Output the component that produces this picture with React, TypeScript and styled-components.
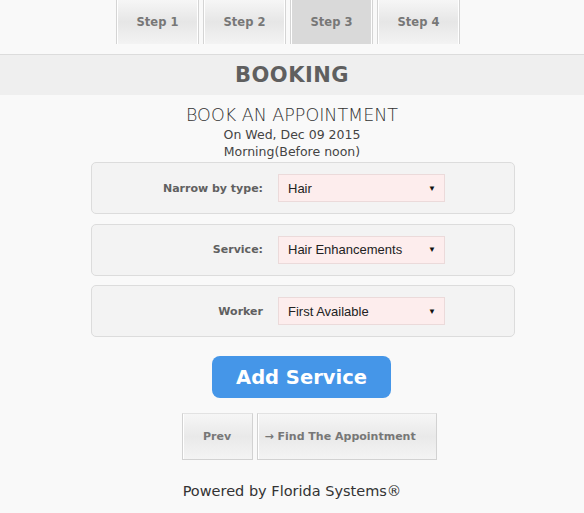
import React, { useState } from 'react';
import styled, { createGlobalStyle } from 'styled-components';

const GlobalStyle = createGlobalStyle`
    html, body {
        margin: 0;
        padding: 0;
        background: #f9f9f9;
        font-family: "DejaVu Sans", "Liberation Sans", sans-serif;
        color: #555;
    }
`;

const Page = styled.div`
    width: 584px;
    height: 513px;
    overflow: hidden;
    display: flex;
    flex-direction: column;
    align-items: center;
`;

const Tabs = styled.nav`
    display: flex;
    gap: 4px;
    height: 44px;
    align-self: stretch;
    justify-content: center;
    padding-right: 8px;
    margin-bottom: 10px;
`;

const Tab = styled.button<{ $active: boolean }>`
    width: 83px;
    height: 44px;
    border: none;
    border-left: 1px solid #d4d4d4;
    border-right: 1px solid #d4d4d4;
    box-shadow: inset 1px 0 0 #fff, inset -1px 0 0 #fff;
    background: ${p => p.$active
        ? '#d9d9d9'
        : 'linear-gradient(#f6f6f6 0%, #e6e6e6 50%, #f3f3f3 100%)'};
    font-family: "DejaVu Sans", sans-serif;
    font-weight: bold;
    font-size: 11.5px;
    color: #777;
    padding: 0;
    cursor: pointer;
`;

const TitleBar = styled.h1`
    align-self: stretch;
    margin: 0;
    height: 40px;
    line-height: 41px;
    border-top: 1px solid #dcdcdc;
    background: #efefef;
    text-align: center;
    font-size: 21px;
    font-weight: bold;
    color: #5f5f5f;
    letter-spacing: 0.5px;
`;

const Heading = styled.h2`
    margin: 10px 0 0;
    font-size: 17.5px;
    font-weight: 200;
    color: #333;
    line-height: 21px;
`;

const SubLine = styled.div`
    font-size: 12.5px;
    line-height: 17px;
    color: #444;
`;

const Panels = styled.div`
    display: flex;
    flex-direction: column;
    gap: 9.5px;
    margin-top: 2px;
    margin-left: 22px;
`;

const Panel = styled.div`
    width: 424px;
    height: 52px;
    box-sizing: border-box;
    border: 1px solid #dcdcdc;
    border-radius: 5px;
    background: #f3f3f3;
    display: grid;
    grid-template-columns: 171px 167px;
    column-gap: 15px;
    align-items: center;
`;

const Label = styled.label`
    text-align: right;
    font-size: 11px;
    font-weight: bold;
    color: #606060;
`;

const Select = styled.div`
    height: 28px;
    box-sizing: border-box;
    border: 1px solid #ebdada;
    background: #fdeded;
    display: flex;
    align-items: center;
    justify-content: space-between;
    padding: 0 8px 0 9px;
    font-family: "Liberation Sans", Arial, sans-serif;
    font-size: 13px;
    color: #222;
`;

const Caret = styled.span`
    font-size: 8px;
    color: #111;
`;

const AddButton = styled.button`
    margin-top: 19px;
    margin-left: 19px;
    width: 179px;
    height: 42px;
    border: none;
    border-radius: 8px;
    background: #4596e8;
    color: #fff;
    font-family: "DejaVu Sans", sans-serif;
    font-weight: bold;
    font-size: 19.5px;
    cursor: pointer;
`;

const NavRow = styled.div`
    display: flex;
    gap: 4px;
    margin-top: 15px;
    margin-left: 34px;
`;

const NavButton = styled.button<{ $w: number; $left?: boolean }>`
    width: ${p => p.$w}px;
    height: 47px;
    box-sizing: border-box;
    border: 1px solid #d2d2d2;
    border-top-color: #e2e2e2;
    box-shadow: inset 1px 0 0 #fff;
    background: linear-gradient(#f6f6f6 0%, #e9e9e9 50%, #f4f4f4 100%);
    font-family: "DejaVu Sans", sans-serif;
    font-weight: bold;
    font-size: 11px;
    color: #777;
    text-align: ${p => (p.$left ? 'left' : 'center')};
    padding: ${p => (p.$left ? '0 0 0 7px' : '0')};
    cursor: pointer;
`;

const Footer = styled.footer`
    margin-top: 23px;
    font-size: 14.5px;
    color: #333;
`;

const steps = ['Step 1', 'Step 2', 'Step 3', 'Step 4'];

const fields = [
    { label: 'Narrow by type:', value: 'Hair' },
    { label: 'Service:', value: 'Hair Enhancements' },
    { label: 'Worker', value: 'First Available' },
];

const App: React.FC = () => {
    const [step, setStep] = useState(2);

    return (
        <Page>
            <GlobalStyle />
            <Tabs>
                {steps.map((s, i) => (
                    <Tab key={s} $active={i === step} onClick={() => setStep(i)}>
                        {s}
                    </Tab>
                ))}
            </Tabs>
            <TitleBar>BOOKING</TitleBar>
            <Heading>BOOK AN APPOINTMENT</Heading>
            <SubLine>On Wed, Dec 09 2015</SubLine>
            <SubLine>Morning(Before noon)</SubLine>
            <Panels>
                {fields.map(f => (
                    <Panel key={f.label}>
                        <Label>{f.label}</Label>
                        <Select>
                            {f.value}
                            <Caret>▼</Caret>
                        </Select>
                    </Panel>
                ))}
            </Panels>
            <AddButton>Add Service</AddButton>
            <NavRow>
                <NavButton $w={71}>Prev</NavButton>
                <NavButton $w={180} $left>→ Find The Appointment</NavButton>
            </NavRow>
            <Footer>Powered by Florida Systems®</Footer>
        </Page>
    );
};

export default App;
